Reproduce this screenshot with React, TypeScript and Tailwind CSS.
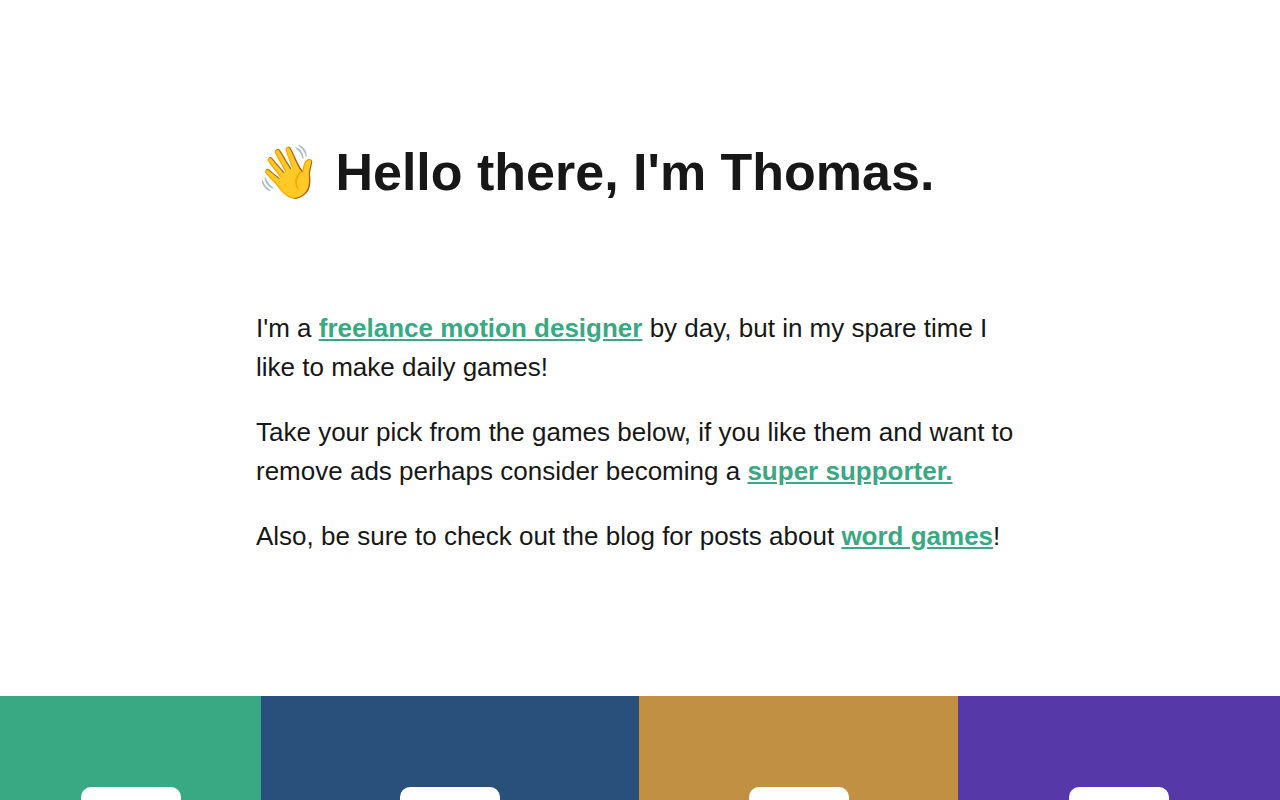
import React from "react";

interface Game {
  name: string;
  background: string;
}

const games: Game[] = [
  { name: "Green game", background: "bg-[#38a983]" },
  { name: "Blue game", background: "bg-[#29507b]" },
  { name: "Gold game", background: "bg-[#c29042]" },
  { name: "Purple game", background: "bg-[#5638a9]" },
];

function TextLink({ children }: { children: React.ReactNode }) {
  return (
    <a href="#" className="font-bold text-[#38a983] underline">
      {children}
    </a>
  );
}

export default function App() {
  return (
    <main className="min-h-screen bg-white font-['Liberation_Sans',Arial,sans-serif] text-[#171717]">
      {/* INTRO */}
      <section className="mx-auto w-3/5 pt-[133px] pb-[140px]">
        <h1 className="text-[52px] leading-[78px] font-bold">
          👋 Hello there, I'm Thomas.
        </h1>
        <div className="mt-[98px] flex flex-col gap-[26px] text-[26px] leading-[39px]">
          <p>
            I'm a <TextLink>freelance motion designer</TextLink> by day, but in
            my spare time I like to make daily games!
          </p>
          <p>
            Take your pick from the games below, if you like them and want to
            remove ads perhaps consider becoming a{" "}
            <TextLink>super supporter.</TextLink>
          </p>
          <p>
            Also, be sure to check out the blog for posts about{" "}
            <TextLink>word games</TextLink>!
          </p>
        </div>
      </section>

      {/* GAMES */}
      <section className="grid grid-cols-[261fr_378fr_319fr_322fr]">
        {games.map((game) => (
          <a
            key={game.name}
            href="#"
            aria-label={game.name}
            className={`flex justify-center py-[91px] ${game.background}`}
          >
            <span className="size-[100px] rounded-[10px] bg-white" />
          </a>
        ))}
      </section>
    </main>
  );
}
